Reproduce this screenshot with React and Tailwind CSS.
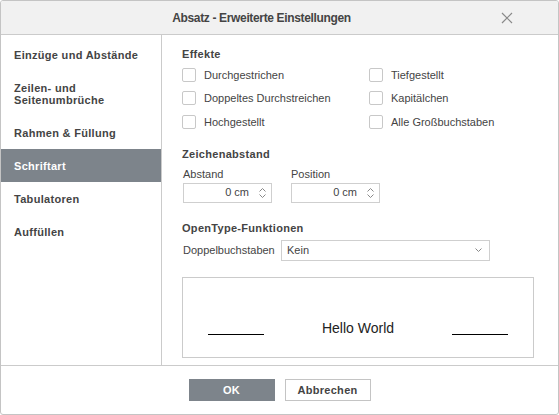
import { useState } from "react";

const menu = [
  { id: "indent", label: ["Einzüge und Abstände"] },
  { id: "breaks", label: ["Zeilen- und", "Seitenumbrüche"] },
  { id: "borders", label: ["Rahmen & Füllung"] },
  { id: "font", label: ["Schriftart"] },
  { id: "tabs", label: ["Tabulatoren"] },
  { id: "padding", label: ["Auffüllen"] },
];

function Checkbox({ label }) {
  return (
    <label className="flex items-center h-[23.5px] cursor-pointer">
      <span className="w-[14px] h-[14px] border border-[#c8c8c8] rounded-[2px] bg-white shrink-0" />
      <span className="ml-[8px] text-[11px] text-[#444]">{label}</span>
    </label>
  );
}

function Spin({ value }) {
  return (
    <div className="flex items-center w-[89px] h-[20px] border border-[#cfcfcf] bg-white">
      <span className="flex-1 text-right text-[11px] text-[#444] pr-[6px]">{value}</span>
      <div className="flex flex-col items-center justify-center w-[14px] mr-[2px] gap-[2px]">
        <svg width="7" height="4" viewBox="0 0 7 4">
          <path d="M0.5 3.5 L3.5 0.5 L6.5 3.5" fill="none" stroke="#888" strokeWidth="1" />
        </svg>
        <svg width="7" height="4" viewBox="0 0 7 4">
          <path d="M0.5 0.5 L3.5 3.5 L6.5 0.5" fill="none" stroke="#888" strokeWidth="1" />
        </svg>
      </div>
    </div>
  );
}

export default function App() {
  const [active, setActive] = useState("font");

  return (
    <div className="w-[559px] h-[415px] bg-white font-['Liberation_Sans',Arial,sans-serif] text-[#444]">
      <div className="w-full h-full flex flex-col border border-[#c4c4c4] rounded-[3px] overflow-hidden">
        {/* Header */}
        <div className="h-[34px] shrink-0 bg-[#f1f1f1] border-b border-[#cbcbcb] flex items-center justify-center pr-[36px] relative">
          <span className="text-[12px] font-bold text-[#444] tracking-[-0.35px]">
            Absatz - Erweiterte Einstellungen
          </span>
          <button className="absolute right-[45px] top-[11px] w-[12px] h-[12px]">
            <svg width="12" height="12" viewBox="0 0 12 12">
              <path d="M1 1 L11 11 M11 1 L1 11" stroke="#8a8a8a" strokeWidth="1.2" />
            </svg>
          </button>
        </div>

        {/* Body */}
        <div className="flex flex-1 border-b border-[#cbcbcb]">
          <div className="w-[161px] shrink-0 border-r border-[#cbcbcb] pt-[3px]">
            {menu.map((m) => (
              <div
                key={m.id}
                onClick={() => setActive(m.id)}
                className={
                  "pl-[13px] pr-[10px] py-[10.5px] text-[11px] leading-[12px] font-bold tracking-[0.3px] cursor-pointer " +
                  (active === m.id ? "bg-[#7d848b] text-white" : "text-[#444]")
                }
              >
                {m.label.map((l) => (
                  <div key={l}>{l}</div>
                ))}
              </div>
            ))}
          </div>

          <div className="flex-1 pl-[20px] pr-[24px] pt-[13px]">
            <div className="text-[11px] font-bold tracking-[0.3px] leading-[13px]">Effekte</div>
            <div className="flex mt-[2px]">
              <div className="w-[187px]">
                <Checkbox label="Durchgestrichen" />
                <Checkbox label="Doppeltes Durchstreichen" />
                <Checkbox label="Hochgestellt" />
              </div>
              <div>
                <Checkbox label="Tiefgestellt" />
                <Checkbox label="Kapitälchen" />
                <Checkbox label="Alle Großbuchstaben" />
              </div>
            </div>

            <div className="text-[11px] font-bold tracking-[0.3px] leading-[13px] mt-[14px]">Zeichenabstand</div>
            <div className="flex gap-[19px] mt-[7px]">
              <div className="pl-[1px]">
                <div className="text-[11px] leading-[13px] mb-[2px]">Abstand</div>
                <Spin value="0 cm" />
              </div>
              <div>
                <div className="text-[11px] leading-[13px] mb-[2px]">Position</div>
                <Spin value="0 cm" />
              </div>
            </div>

            <div className="text-[11px] font-bold tracking-[0.3px] leading-[13px] mt-[19px]">OpenType-Funktionen</div>
            <div className="flex items-center mt-[5px] pl-[1px]">
              <span className="text-[11px] w-[98px]">Doppelbuchstaben</span>
              <div className="flex items-center w-[209px] h-[21px] border border-[#cfcfcf] bg-white px-[5px]">
                <span className="flex-1 text-[11px]">Kein</span>
                <svg width="7" height="4" viewBox="0 0 7 4" className="mr-[2px]">
                  <path d="M0.5 0.5 L3.5 3.5 L6.5 0.5" fill="none" stroke="#888" strokeWidth="1" />
                </svg>
              </div>
            </div>

            <div className="mt-[16px] w-[352px] h-[81px] border border-[#cbcbcb] flex justify-between items-start px-[25px] pt-[42px]">
              <div className="w-[56px] h-px bg-black mt-[14px]" />
              <span className="text-[14px] leading-[16px] text-[#222]">Hello World</span>
              <div className="w-[56px] h-px bg-black mt-[14px]" />
            </div>
          </div>
        </div>

        {/* Footer */}
        <div className="h-[48px] shrink-0 flex items-center justify-center gap-[10px]">
          <button className="w-[86px] h-[22px] bg-[#7d848b] text-white text-[11px] font-bold tracking-[0.3px]">
            OK
          </button>
          <button className="w-[86px] h-[22px] border border-[#c4c4c4] bg-white text-[#444] text-[11px] font-bold tracking-[0.3px]">
            Abbrechen
          </button>
        </div>
      </div>
    </div>
  );
}
